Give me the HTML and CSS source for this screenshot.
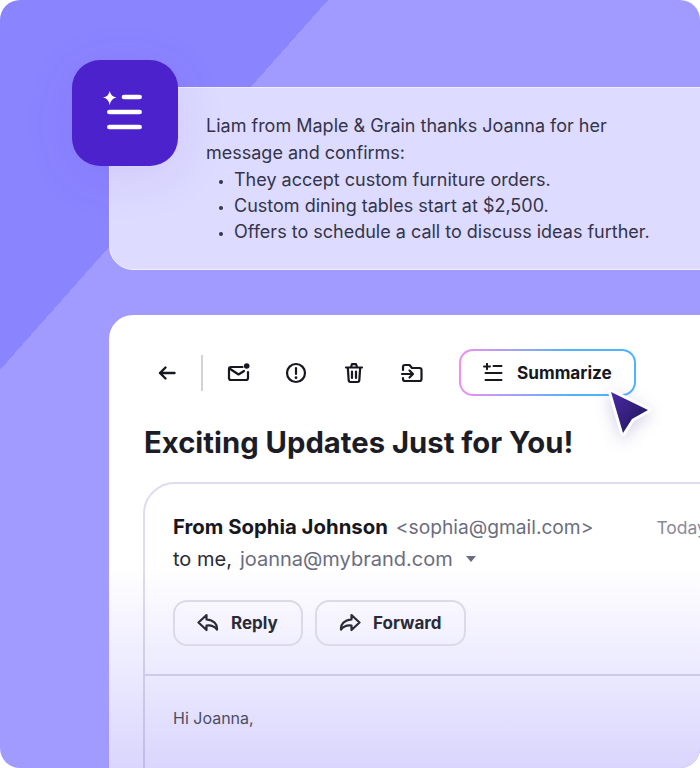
FILE: index.html
```html
<!DOCTYPE html>
<html lang="en">
<head>
<meta charset="utf-8">
<title>Summarize</title>
<link rel="stylesheet" href="styles.css">
</head>
<body>
<main class="stage">
  <div class="tile">
    <svg width="44" height="44" viewBox="0 0 44 44" fill="none"><path d="M6.700 0Q7.700 5.500 13.700 6.500 7.700 7.500 6.700 14 5.700 7.500 0 6.500 5.700 5.500 6.700 0Z" fill="#fff"/><path d="M21 6H36.600M6.400 21H36.600M6.400 36H36.600" stroke="#fff" stroke-width="4.700" stroke-linecap="round"/></svg>
  </div>
  <section class="summary">
    <p class="summary-intro">Liam from Maple &amp; Grain thanks Joanna for her message and confirms:</p>
    <ul class="summary-list">
      <li>They accept custom furniture orders.</li>
      <li>Custom dining tables start at $2,500.</li>
      <li>Offers to schedule a call to discuss ideas further.</li>
    </ul>
  </section>
  <section class="mail">
    <div class="toolbar">
      <span class="tool tool-back"><svg width="24" height="24" viewBox="0 0 24 24" fill="none" stroke="#17171f" stroke-width="2.400" stroke-linecap="round" stroke-linejoin="round"><path d="M19.500 12H5M10.500 6.500 5 12l5.500 5.500"/></svg></span>
      <span class="tool-sep"></span>
      <span class="tool"><svg width="24" height="24" viewBox="0 0 24 24" fill="none" stroke="#17171f" stroke-width="2.200" stroke-linecap="round" stroke-linejoin="round"><path d="M16.500 6H5a2 2 0 0 0-2 2v9a2 2 0 0 0 2 2h15a2 2 0 0 0 2-2v-6"/><path d="M3.500 7.500 12.500 13.500 18 10"/><circle cx="20.700" cy="5" r="2.800" fill="#17171f" stroke="none"/></svg></span>
      <span class="tool"><svg width="24" height="24" viewBox="0 0 24 24" fill="none" stroke="#17171f" stroke-width="2.200" stroke-linecap="round"><circle cx="12" cy="12" r="9"/><path d="M12 7V13"/><circle cx="12" cy="16.700" r="1.400" fill="#17171f" stroke="none"/></svg></span>
      <span class="tool"><svg width="24" height="24" viewBox="0 0 24 24" fill="none" stroke="#17171f" stroke-width="2.200" stroke-linecap="round" stroke-linejoin="round"><path d="M4 6.500h16M9 6 10 3.200h4L15 6M5.800 6.500l.9 13a1.700 1.700 0 0 0 1.700 1.500h7.200a1.700 1.700 0 0 0 1.700-1.500l.9-13M10 10.500v6.500M14 10.500v6.500"/></svg></span>
      <span class="tool"><svg width="24" height="24" viewBox="0 0 24 24" fill="none" stroke="#17171f" stroke-width="2.200" stroke-linecap="round" stroke-linejoin="round"><path d="M3 9V6a2 2 0 0 1 2-2h4.500L12 7h7.500a2 2 0 0 1 2 2v9a2 2 0 0 1-2 2H5a2 2 0 0 1-2-2v-1"/><path d="M2 13H12.500M9.500 9.500 13 13l-3.500 3.500"/></svg></span>
      <button class="summarize" type="button">
        <svg width="20" height="20" viewBox="0 0 20 20" fill="none" stroke="#17171f" stroke-width="2" stroke-linecap="round"><path d="M1 3.500H7M4 .8V6.200M10.500 3H18.500M2.500 10H18.500M2.500 17H18.500"/></svg>
        <span>Summarize</span>
      </button>
      <svg class="cursor" width="56" height="60" viewBox="0 0 56 60"><defs><linearGradient id="cursor-fill" x1="0" y1="0" x2="1" y2="1"><stop offset="0" stop-color="#4a2aa8"/><stop offset="1" stop-color="#1d1550"/></linearGradient></defs><path class="cursor-arrow" d="M8 8 45 26 29 35 20 49Z" fill="url(#cursor-fill)" stroke="#fff" stroke-width="6" stroke-linejoin="round"/></svg>
    </div>
    <h1 class="subject">Exciting Updates Just for You!</h1>
    <article class="message">
      <header class="message-head">
        <div class="from-row">
          <span class="from-name">From Sophia Johnson</span>
          <span class="from-addr">&lt;sophia@gmail.com&gt;</span>
          <span class="date">Today</span>
        </div>
        <div class="to-row">
          <span class="to-me">to me,</span>
          <span class="to-addr">joanna@mybrand.com</span>
          <span class="caret"></span>
        </div>
        <div class="actions">
          <button class="action action-reply" type="button"><svg width="22" height="20" viewBox="0 0 22 20" fill="none" stroke="#2a2a38" stroke-width="2.200" stroke-linejoin="round" stroke-linecap="round"><path d="M9.500 2 1.500 9.500l8 7.500v-4.500c4-.5 7.500 0 10.500 4 .5-5-3-9.500-10.500-10Z"/></svg><span>Reply</span></button>
          <button class="action action-forward" type="button"><svg width="22" height="20" viewBox="0 0 22 20" fill="none" stroke="#2a2a38" stroke-width="2.200" stroke-linejoin="round" stroke-linecap="round"><path d="M12.500 2l8 7.500-8 7.500v-4.500c-4-.5-7.500 0-10.500 4-.5-5 3-9.500 10.500-10Z"/></svg><span>Forward</span></button>
        </div>
      </header>
      <p class="greeting">Hi Joanna,</p>
    </article>
  </section>
</main>
</body>
</html>
```
FILE: styles.css
```css
* { box-sizing: border-box; }
html, body { margin: 0; padding: 0; background: #fff; }
body { font-family: "Inter", "Liberation Sans", sans-serif; color: #34344a; }
.stage {
  position: relative;
  width: 700px;
  height: 768px;
  overflow: hidden;
  padding: 87px 0 0 109px;
  border-radius: 20px;
  background: linear-gradient(131.560deg, #8b84ff 0, #8b84ff 245.400px, #a29bff 245.400px, #a29bff 100%);
}
.tile {
  position: absolute;
  left: 72px;
  top: 60px;
  z-index: 2;
  width: 106px;
  height: 106px;
  border-radius: 28px;
  background: #4c22cd;
  box-shadow: 0 10px 50px rgba(76, 34, 205, .1);
  display: flex;
  align-items: center;
  justify-content: center;
}
.summary {
  width: 640px;
  height: 183px;
  padding: 24px 0 0 96px;
  border: 1px solid #f0eeff;
  border-radius: 24px;
  background: #dddbff;
}
.summary-intro { margin: 0; width: 450px; font-size: 18px; line-height: 27px; }
.summary-list { margin: 1px 0 0; padding: 0 0 0 28px; font-size: 18px; line-height: 26px; }
.summary-list li::marker { font-size: 13px; }
.mail {
  width: 640px;
  height: 460px;
  margin-top: 45px;
  padding: 34px 0 0 34px;
  border-radius: 24px 24px 0 0;
  background: linear-gradient(#fff 0, #fff 55%, #d8d4fd 100%);
}
.toolbar { position: relative; display: flex; align-items: center; height: 47px; }
.tool { display: flex; width: 24px; height: 24px; margin-right: 34px; }
.tool-back { margin-left: 12px; margin-right: 22px; }
.tool-sep { width: 2px; height: 36px; margin-right: 23px; background: #d2d2da; }
.summarize {
  display: flex;
  align-items: center;
  gap: 14px;
  width: 177px;
  height: 47px;
  margin-left: 1px;
  padding: 0 0 0 22px;
  border: 2px solid transparent;
  border-radius: 14px;
  background: linear-gradient(#fff, #fff) padding-box, linear-gradient(90deg, #f18ff0, #4db4ff 65%) border-box;
  font: 700 17.200px "Inter", "Liberation Sans", sans-serif;
  color: #17171f;
}
.cursor {
  position: absolute;
  left: 460px;
  top: 35px;
  filter: drop-shadow(0 4px 8px rgba(60, 40, 140, .22));
}
.cursor-arrow { paint-order: stroke; }
.subject {
  margin: 27px 0 0 1px;
  font-size: 29.250px;
  line-height: 40px;
  font-weight: 700;
  color: #1c1c26;
}
.message {
  width: 600px;
  height: 320px;
  margin-top: 19px;
  border: 2px solid rgba(90, 80, 170, .2);
  border-radius: 32px 0 0 0;
}
.message-head { padding: 29px 0 28px 28px; border-bottom: 2px solid rgba(90, 80, 170, .2); }
.from-row { display: flex; align-items: baseline; height: 28px; white-space: nowrap; }
.from-name { font-size: 20.350px; line-height: 28px; font-weight: 700; color: #17171f; }
.from-addr { margin-left: 8px; font-size: 19.200px; color: #6c6c80; }
.date { margin-left: 63px; font-size: 17.500px; color: #8a8a9a; }
.to-row { display: flex; align-items: center; height: 28px; margin-top: 4px; font-size: 20px; }
.to-me { color: #2a2a38; }
.to-addr { margin-left: 8px; color: #6c6c80; }
.caret {
  margin-left: 13px;
  border-left: 5.500px solid transparent;
  border-right: 5.500px solid transparent;
  border-top: 6px solid #6c6c80;
}
.actions { display: flex; gap: 12px; margin-top: 27px; }
.action {
  display: flex;
  align-items: center;
  gap: 12px;
  height: 46px;
  padding: 0 0 0 22px;
  border: 2px solid #dcdae8;
  border-radius: 14px;
  background: transparent;
  font: 700 17px "Inter", "Liberation Sans", sans-serif;
  color: #2a2a38;
}
.action-reply { width: 130px; }
.action-forward { width: 151px; }
.greeting { margin: 32px 0 0 28px; font-size: 16px; line-height: 20px; color: #4e4d63; }
```
